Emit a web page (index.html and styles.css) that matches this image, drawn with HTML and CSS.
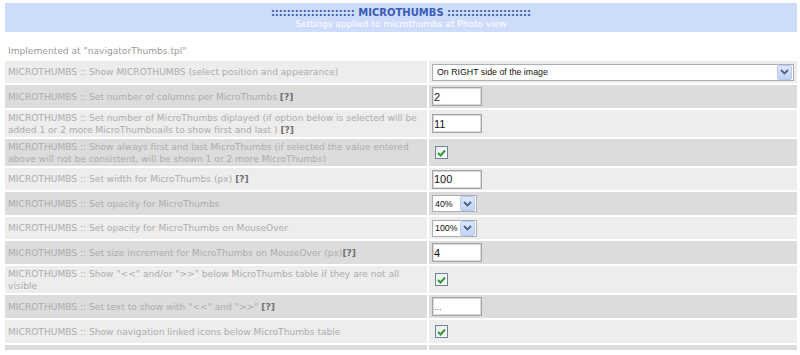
FILE: index.html
```html
<!DOCTYPE html>
<html lang="en">
<head>
    <meta charset="UTF-8" />
    <title>MicroThumbs settings</title>
    <link rel="stylesheet" href="styles.css">
</head>
<body>
    <div class="page">
        <table class="settings">
            <tr>
                <td colspan="2" class="head">
                    <div class="title">::::::::::::::::::::: MICROTHUMBS :::::::::::::::::::::</div>
                    <div class="subtitle">Settings applied to microthumbs at Photo view</div>
                </td>
            </tr>
            <tr>
                <td colspan="2" class="note">Implemented at "navigatorThumbs.tpl"</td>
            </tr>

            <tr class="light short">
                <td class="label">MICROTHUMBS :: Show MICROTHUMBS (select position and appearance)</td>
                <td class="field">
                    <span class="dropdown wide">
                        <select>
                            <option>On RIGHT side of the image</option>
                            <option>On LEFT side of the image</option>
                            <option>Below the image</option>
                        </select>
                        <span class="arrow"><svg width="9" height="6" viewBox="0 0 9 6"><path d="M1 1l3.5 3.5L8 1" fill="none" stroke="#4d6185" stroke-width="1.8"/></svg></span>
                    </span>
                </td>
            </tr>
            <tr class="dark">
                <td class="label">MICROTHUMBS :: Set number of columns per MicroThumbs <b>[?]</b></td>
                <td class="field"><input type="text" class="num" value="2"></td>
            </tr>
            <tr class="light tall">
                <td class="label">MICROTHUMBS :: Set number of MicroThumbs diplayed (if option below is selected will be<br>added 1 or 2 more MicroThumbnails to show first and last ) <b>[?]</b></td>
                <td class="field"><input type="text" class="num" value="11"></td>
            </tr>
            <tr class="dark tall">
                <td class="label">MICROTHUMBS :: Show always first and last MicroThumbs (if selected the value entered<br>above will not be consistent, will be shown 1 or 2 more MicroThumbs)</td>
                <td class="field">
                    <span class="check"><svg width="9" height="8" viewBox="0 0 9 8"><path d="M1 4l2.5 2.5L8 1.5" fill="none" stroke="#2f9a2f" stroke-width="1.9"/></svg></span>
                </td>
            </tr>
            <tr class="light short">
                <td class="label">MICROTHUMBS :: Set width for MicroThumbs (px) <b>[?]</b></td>
                <td class="field"><input type="text" class="num" value="100"></td>
            </tr>
            <tr class="dark">
                <td class="label">MICROTHUMBS :: Set opacity for MicroThumbs</td>
                <td class="field">
                    <span class="dropdown small">
                        <select>
                            <option>40%</option>
                            <option>60%</option>
                            <option>80%</option>
                            <option>100%</option>
                        </select>
                        <span class="arrow"><svg width="9" height="6" viewBox="0 0 9 6"><path d="M1 1l3.5 3.5L8 1" fill="none" stroke="#4d6185" stroke-width="1.8"/></svg></span>
                    </span>
                </td>
            </tr>
            <tr class="light short">
                <td class="label">MICROTHUMBS :: Set opacity for MicroThumbs on MouseOver</td>
                <td class="field">
                    <span class="dropdown small">
                        <select>
                            <option>100%</option>
                            <option>80%</option>
                            <option>60%</option>
                        </select>
                        <span class="arrow"><svg width="9" height="6" viewBox="0 0 9 6"><path d="M1 1l3.5 3.5L8 1" fill="none" stroke="#4d6185" stroke-width="1.8"/></svg></span>
                    </span>
                </td>
            </tr>
            <tr class="dark">
                <td class="label">MICROTHUMBS :: Set size increment for MicroThumbs on MouseOver (px)<b>[?]</b></td>
                <td class="field"><input type="text" class="num" value="4"></td>
            </tr>
            <tr class="light tall">
                <td class="label">MICROTHUMBS :: Show "&lt;&lt;" and/or "&gt;&gt;" below MicroThumbs table if they are not all<br>visible</td>
                <td class="field">
                    <span class="check"><svg width="9" height="8" viewBox="0 0 9 8"><path d="M1 4l2.5 2.5L8 1.5" fill="none" stroke="#2f9a2f" stroke-width="1.9"/></svg></span>
                </td>
            </tr>
            <tr class="dark">
                <td class="label">MICROTHUMBS :: Set text to show with "&lt;&lt;" and "&gt;&gt;" <b>[?]</b></td>
                <td class="field"><input type="text" class="num dots" value="..."></td>
            </tr>
            <tr class="light">
                <td class="label">MICROTHUMBS :: Show navigation linked icons below MicroThumbs table</td>
                <td class="field">
                    <span class="check"><svg width="9" height="8" viewBox="0 0 9 8"><path d="M1 4l2.5 2.5L8 1.5" fill="none" stroke="#2f9a2f" stroke-width="1.9"/></svg></span>
                </td>
            </tr>
            <tr class="dark last">
                <td class="label"></td>
                <td class="field"></td>
            </tr>
        </table>
    </div>
</body>
</html>
```

FILE: styles.css
```css
body {
    margin: 0;
    background: #fff;
    font-family: "DejaVu Sans", Verdana, sans-serif;
}
.page {
    padding: 1px 1px 0 3px;
    height: 355px;
    overflow: hidden;
}
.settings {
    width: 796px;
    border-spacing: 2px;
}
.settings td {
    padding: 1px 3px;
    font-size: 9.1px;
    line-height: 12px;
    color: #acacac;
}
.head {
    background: #cddcfb;
    text-align: center;
}
.settings td.head {
    padding: 4px 0 2px;
}
.title {
    color: #3a5bb4;
    font-weight: bold;
    font-size: 10px;
    line-height: 12px;
}
.subtitle {
    color: #fff;
    font-size: 9px;
    line-height: 11px;
}
.settings td.note {
    padding: 11px 3px 2px;
    color: #9a9a9a;
}
.light td {
    background: #ededed;
}
.dark td {
    background: #dcdcdc;
}
.settings tr.light, .settings tr.dark {
    height: 23px;
}
.settings tr.short {
    height: 22px;
}
.settings tr.tall {
    height: 27px;
}
.settings tr.last {
    height: 5px;
}
.settings tr.last td {
    padding: 0;
}
.settings td.label {
    width: 416px;
}
.settings td.field {
    padding: 0 3px;
}
.label b {
    color: #707070;
}
.num {
    width: 46px;
    height: 15px;
    padding: 1px 1px;
    border: 1px solid #a4a4a4;
    box-shadow: inset 0 0 0 1px #dadada;
    font-family: "Liberation Sans", Arial, sans-serif;
    font-size: 11px;
    color: #111;
    background: #fff;
    vertical-align: middle;
}
.dots {
    font-size: 9px;
    color: #555;
}
.dropdown {
    display: inline-flex;
    align-items: center;
    height: 15px;
    border: 1px solid #a9afb5;
    background: #fff;
    vertical-align: middle;
}
.dropdown select {
    appearance: none;
    -webkit-appearance: none;
    border: none;
    background: transparent;
    flex: 1;
    height: 15px;
    padding: 0 4px;
    font-family: "Liberation Sans", Arial, sans-serif;
    font-size: 8.8px;
    color: #111;
    outline: none;
}
.dropdown.wide {
    width: 360px;
}
.dropdown.small {
    width: 43px;
}
.dropdown.small select {
    padding: 0 2px;
    width: 30px;
}
.arrow {
    display: flex;
    align-items: center;
    justify-content: center;
    width: 13px;
    height: 13px;
    margin-right: 1px;
    border: 1px solid #b9c9ec;
    border-radius: 2px;
    background: linear-gradient(#dde7fd, #c2d3f6);
}
.check {
    display: inline-flex;
    align-items: center;
    justify-content: center;
    width: 11px;
    height: 11px;
    margin-left: 3px;
    border: 1px solid #6f8597;
    background: linear-gradient(135deg, #e9eef1, #fbfcfc);
    vertical-align: middle;
}
```
